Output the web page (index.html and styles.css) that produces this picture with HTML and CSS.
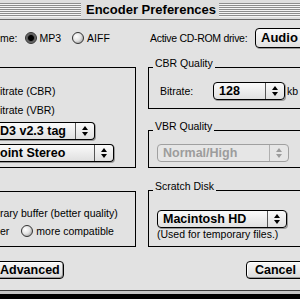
FILE: index.html
```html
<!DOCTYPE html>
<html lang="en">

<head>
    <meta charset="UTF-8">
    <title>Encoder Preferences</title>
    <link rel="stylesheet" href="styles.css">
</head>

<body>
    <div class="window">
        <!-- Title bar -->
        <div class="titlebar">
            <span class="stripes"></span>
            <h1 class="title">Encoder Preferences</h1>
            <span class="stripes"></span>
        </div>

        <div class="content">
            <div class="top-row">
                <div class="format">
                    <span>me:</span>
                    <label class="radio-item"><span class="radio on"></span>MP3</label>
                    <label class="radio-item"><span class="radio"></span>AIFF</label>
                </div>
                <div class="drive">
                    <span class="drive-label">Active CD-ROM drive:</span>
                    <div class="popup popup-drive">
                        <span class="popup-text">Audio</span>
                    </div>
                </div>
            </div>

            <div class="columns">
                <div class="col-left">
                    <div class="box box-mode">
                        <div class="line">itrate (CBR)</div>
                        <div class="line line-gap">itrate (VBR)</div>
                        <div class="popup popup-tag">
                            <span class="popup-text">D3 v2.3 tag</span>
                            <span class="popup-arrows"><svg width="6" height="10" viewBox="0 0 6 10"><path d="M0 4 3 0 6 4Z M0 6 3 10 6 6Z" /></svg></span>
                        </div>
                        <div class="popup popup-stereo">
                            <span class="popup-text">oint Stereo</span>
                            <span class="popup-arrows"><svg width="6" height="10" viewBox="0 0 6 10"><path d="M0 4 3 0 6 4Z M0 6 3 10 6 6Z" /></svg></span>
                        </div>
                    </div>

                    <div class="box box-buffer">
                        <div class="line">rary buffer (better quality)</div>
                        <div class="line radio-line">
                            <span>er</span>
                            <label class="radio-item"><span class="radio"></span>more compatible</label>
                        </div>
                    </div>
                </div>

                <div class="col-right">
                    <div class="group group-cbr">
                        <div class="group-head"><span class="group-title">CBR Quality</span></div>
                        <div class="group-body cbr-body">
                            <span class="bitrate-label">Bitrate:</span>
                            <div class="popup popup-bitrate">
                                <span class="popup-text">128</span>
                                <span class="popup-arrows"><svg width="6" height="10" viewBox="0 0 6 10"><path d="M0 4 3 0 6 4Z M0 6 3 10 6 6Z" /></svg></span>
                            </div>
                            <span class="unit">kb</span>
                        </div>
                    </div>

                    <div class="group group-vbr">
                        <div class="group-head"><span class="group-title">VBR Quality</span></div>
                        <div class="group-body vbr-body">
                            <div class="popup popup-wide disabled">
                                <span class="popup-text">Normal/High</span>
                                <span class="popup-arrows"><svg width="6" height="10" viewBox="0 0 6 10"><path d="M0 4 3 0 6 4Z M0 6 3 10 6 6Z" /></svg></span>
                            </div>
                        </div>
                    </div>

                    <div class="group group-scratch">
                        <div class="group-head"><span class="group-title">Scratch Disk</span></div>
                        <div class="group-body scratch-body">
                            <div class="popup popup-disk">
                                <span class="popup-text">Macintosh HD</span>
                                <span class="popup-arrows"><svg width="6" height="10" viewBox="0 0 6 10"><path d="M0 4 3 0 6 4Z M0 6 3 10 6 6Z" /></svg></span>
                            </div>
                            <div class="note">(Used for temporary files.)</div>
                        </div>
                    </div>
                </div>
            </div>

            <div class="buttons">
                <button class="btn btn-advanced">Advanced</button>
                <button class="btn btn-cancel">Cancel</button>
            </div>
        </div>

        <div class="win-edge"></div>
    </div>
</body>

</html>
```

FILE: styles.css
```css
body {
    margin: 0;
    background-color: #000;
    font-family: "Liberation Sans", Arial, sans-serif;
    font-size: 10.5px;
    color: #000;
    overflow: hidden;
}

.window {
    width: 300px;
    background-color: #e2e2e2;
    overflow: hidden;
}

/* Title bar */
.titlebar {
    display: flex;
    align-items: center;
    height: 19px;
    border-bottom: 1px solid #6a6a6a;
    background-color: #dedede;
}

.stripes {
    flex: 1;
    height: 14px;
    background: repeating-linear-gradient(to bottom, #8c8c8c 0, #8c8c8c 1px, #f4f4f4 1px, #f4f4f4 2px);
}

.title {
    margin: 0;
    padding: 0 3px 0 5px;
    font-size: 13px;
    font-weight: bold;
    line-height: 19px;
    white-space: nowrap;
}

/* Top row */
.top-row {
    display: grid;
    grid-template-columns: 136px 164px;
    column-gap: 12px;
    align-items: center;
    padding-top: 8px;
}

.format {
    display: flex;
    align-items: center;
    white-space: nowrap;
}

    .format .radio-item {
        margin-left: 7px;
    }

        .format .radio-item + .radio-item {
            margin-left: 11px;
        }

.radio-item {
    display: flex;
    align-items: center;
    gap: 3px;
}

.radio {
    width: 12px;
    height: 12px;
    flex-shrink: 0;
    box-sizing: border-box;
    border: 1px solid #333;
    border-radius: 50%;
    background: radial-gradient(circle at 35% 35%, #fff 0, #e4e4e4 45%, #8a8a8a 100%);
}

    .radio.on {
        background: radial-gradient(circle, #000 0, #000 2.5px, #555 3.5px, #8a8a8a 6px);
    }

.drive {
    display: flex;
    align-items: center;
    padding-left: 2px;
    white-space: nowrap;
}

.drive-label {
    flex-shrink: 0;
    width: 105px;
    letter-spacing: -0.3px;
}

/* Popup menus */
.popup {
    display: flex;
    flex-shrink: 0;
    height: 18px;
    box-sizing: border-box;
    border: 1px solid #000;
    border-radius: 4px;
    background: linear-gradient(#fafafa, #e0e0e0);
    box-shadow: 1px 1px 0 #9a9a9a;
    font-size: 12.5px;
    font-weight: bold;
}

.popup-text {
    flex: 1;
    padding-left: 5px;
    line-height: 16px;
    white-space: nowrap;
    overflow: hidden;
}

.popup-arrows {
    width: 18px;
    display: flex;
    align-items: center;
    justify-content: center;
    border-left: 1px solid #555;
}

    .popup-arrows svg {
        fill: currentColor;
    }

.popup-drive {
    width: 90px;
    height: 20px;
}

    .popup-drive .popup-text {
        line-height: 18px;
        font-size: 13px;
    }

.popup.disabled {
    border-color: #a0a0a0;
    color: #9c9c9c;
    box-shadow: none;
    background: #e6e6e6;
}

    .popup.disabled .popup-arrows {
        border-left-color: #b0b0b0;
    }

/* Two columns */
.columns {
    display: grid;
    grid-template-columns: 136px 164px;
    column-gap: 12px;
    align-items: start;
}

.line {
    line-height: 14px;
    white-space: nowrap;
}

.box {
    border: 1px solid #000;
    border-left: none;
}

.box-mode {
    margin-top: 19px;
    padding: 16px 0 5px;
}

    .box-mode .line-gap {
        margin-top: 5px;
    }

    .box-mode .popup {
        margin-left: -6px;
        border-left: none;
        border-radius: 0 4px 4px 0;
    }

        .box-mode .popup .popup-text {
            padding-left: 6px;
        }

.popup-tag {
    width: 101px;
    margin-top: 5px;
}

.popup-stereo {
    width: 120px;
    margin-top: 4px;
}

.box-buffer {
    margin-top: 23px;
    padding: 14px 0 8px;
}

.radio-line {
    display: flex;
    align-items: center;
    margin-top: 4px;
}

    .radio-line .radio-item {
        margin-left: 12px;
    }

/* Group boxes on the right */
.group-head {
    display: flex;
    align-items: flex-end;
    height: 10px;
}

    .group-head::before {
        content: "";
        width: 5px;
        border-bottom: 1px solid #000;
    }

    .group-head::after {
        content: "";
        flex: 1;
        border-bottom: 1px solid #000;
    }

.group-title {
    padding: 0 2px;
    line-height: 10px;
    white-space: nowrap;
}

.group-body {
    border-left: 1px solid #000;
    border-bottom: 1px solid #000;
}

.group-cbr {
    margin-top: 10px;
}

.cbr-body {
    display: flex;
    align-items: center;
    padding: 14px 0 8px 11px;
    white-space: nowrap;
}

.bitrate-label {
    width: 53px;
    flex-shrink: 0;
}

.popup-bitrate {
    width: 72px;
}

.unit {
    margin-left: 2px;
}

.group-vbr {
    margin-top: 12px;
}

.vbr-body {
    padding: 13px 0 5px 8px;
}

.popup-wide {
    width: 132px;
}

.group-scratch {
    margin-top: 13px;
}

.scratch-body {
    padding: 19px 0 6px 8px;
}

.popup-disk {
    width: 130px;
}

.note {
    line-height: 12px;
    white-space: nowrap;
}

/* Buttons */
.buttons {
    display: flex;
    justify-content: space-between;
    margin-top: 14px;
    padding-bottom: 11px;
}

.btn {
    height: 18px;
    padding: 0 8px;
    border: 1px solid #000;
    border-radius: 4px;
    background: linear-gradient(#f8f8f8, #dadada);
    box-shadow: inset -1px -1px 0 #999, inset 1px 1px 0 #fff;
    font: bold 12.5px "Liberation Sans", Arial, sans-serif;
    line-height: 16px;
    text-align: left;
    color: #000;
}

.btn-advanced {
    width: 73px;
    margin-left: -9px;
}

.btn-cancel {
    width: 66px;
    margin-right: -12px;
}

.win-edge {
    height: 3px;
    border-top: 1px solid #3c3c3c;
    background-color: #c4c4c4;
}
```
